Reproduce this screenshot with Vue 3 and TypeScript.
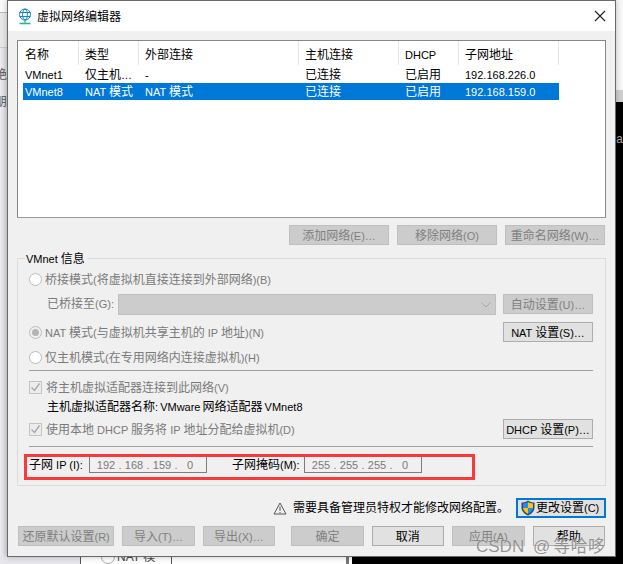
<script setup lang="ts">
import { h } from 'vue'
import type { FunctionalComponent } from 'vue'

/* Latin runs are drawn a size smaller than CJK runs, as the Windows UI font does. */
const T: FunctionalComponent<{ t: string }> = (props) =>
  props.t
    .split(/([\x20-\x7e…]+)/)
    .filter((s) => s.length > 0)
    .map((s) => (/^[\x20-\x7e…]/.test(s) ? h('span', { class: 'lat' }, s) : h('span', s)))
T.props = ['t']

const columns = ['名称', '类型', '外部连接', '主机连接', 'DHCP', '子网地址']
const rows = [
  { cells: ['VMnet1', '仅主机…', '-', '已连接', '已启用', '192.168.226.0'], selected: false },
  { cells: ['VMnet8', 'NAT 模式', 'NAT 模式', '已连接', '已启用', '192.168.159.0'], selected: true },
]
const netButtons = ['添加网络(E)…', '移除网络(O)', '重命名网络(W)…']
const subnetIp = ['192', '168', '159', '0']
const subnetMask = ['255', '255', '255', '0']
</script>

<template>
  <div class="desktop">
    <div class="bg-left">
      <div class="bl-top"></div>
      <div class="bl-mid"></div>
      <div class="bl-band"><span>绝</span><span>朋</span></div>
    </div>
    <div class="bg-right"><span class="bg-a">a</span></div>
    <div class="bg-bottom">
      <div class="bb-box"><span class="bb-radio"></span><span>NAT 模</span></div>
    </div>

    <div class="dialog">
      <header class="titlebar">
        <svg class="globe" width="14" height="18" viewBox="0 0 14 18" fill="none" stroke="#1583c9" stroke-width="1">
          <circle cx="7" cy="6.5" r="5.5" />
          <ellipse cx="7" cy="6.5" rx="2.4" ry="5.5" />
          <path d="M1.5 4.5h11M1.5 8.5h11" />
          <path d="M7 12v2.5M1.5 15.5h11" stroke="#1bb5a8" stroke-width="1.4" />
        </svg>
        <span class="title">虚拟网络编辑器</span>
        <svg class="close" width="12" height="12" viewBox="0 0 12 12" stroke="#222" stroke-width="1.1">
          <path d="M1 1l10 10M11 1L1 11" />
        </svg>
      </header>

      <main class="body">
        <section class="list">
          <div class="list-row list-head">
            <div v-for="c in columns" :key="c" class="head-cell"><T :t="c" /></div>
          </div>
          <div v-for="r in rows" :key="r.cells[0]" class="list-row data-row" :class="{ selected: r.selected }">
            <div v-for="(c, i) in r.cells" :key="i" class="data-cell"><T :t="c" /></div>
          </div>
        </section>

        <div class="net-buttons">
          <button v-for="b in netButtons" :key="b" class="btn disabled net-btn"><T :t="b" /></button>
        </div>

        <section class="group">
          <span class="legend"><T t="VMnet 信息" /></span>

          <label class="opt first"><span class="radio"></span><span class="opt-text"><T t="桥接模式(将虚拟机直接连接到外部网络)(B)" /></span></label>

          <div class="bridge-row">
            <span class="bridge-label"><T t="已桥接至(G):" /></span>
            <div class="combo">
              <svg width="10" height="6" viewBox="0 0 10 6" fill="none" stroke="#a6a6a6"><path d="M.5.5L5 5l4.5-4.5" /></svg>
            </div>
            <button class="btn disabled side-btn"><T t="自动设置(U)…" /></button>
          </div>

          <div class="nat-row">
            <label class="opt"><span class="radio on"></span><span class="opt-text"><T t="NAT 模式(与虚拟机共享主机的 IP 地址)(N)" /></span></label>
            <button class="btn side-btn"><T t="NAT 设置(S)…" /></button>
          </div>

          <label class="opt host"><span class="radio"></span><span class="opt-text"><T t="仅主机模式(在专用网络内连接虚拟机)(H)" /></span></label>

          <hr class="sep sep-a" />

          <label class="opt check-first">
            <span class="check">
              <svg width="11" height="11" viewBox="0 0 11 11" fill="none" stroke="#a8a8a8" stroke-width="1.4"><path d="M1.500 5.500l3 3 5-7" /></svg>
            </span><span class="opt-text"><T t="将主机虚拟适配器连接到此网络(V)" /></span>
          </label>
          <div class="adapter"><T t="主机虚拟适配器名称: VMware 网络适配器 VMnet8" /></div>

          <div class="dhcp-row">
            <label class="opt">
              <span class="check">
                <svg width="11" height="11" viewBox="0 0 11 11" fill="none" stroke="#a8a8a8" stroke-width="1.4"><path d="M1.500 5.500l3 3 5-7" /></svg>
              </span><span class="opt-text"><T t="使用本地 DHCP 服务将 IP 地址分配给虚拟机(D)" /></span>
            </label>
            <button class="btn side-btn"><T t="DHCP 设置(P)…" /></button>
          </div>

          <hr class="sep sep-b" />

          <div class="subnet-row">
            <span class="subnet-label"><T t="子网 IP (I):" /></span>
            <div class="ip">
              <template v-for="(o, i) in subnetIp" :key="i">
                <span class="octet">{{ o }}</span><span v-if="i < 3" class="dot">.</span>
              </template>
            </div>
            <span class="subnet-label mask-label"><T t="子网掩码(M):" /></span>
            <div class="ip">
              <template v-for="(o, i) in subnetMask" :key="i">
                <span class="octet">{{ o }}</span><span v-if="i < 3" class="dot">.</span>
              </template>
            </div>
          </div>
          <div class="redbox"></div>
        </section>

        <div class="warn-row">
          <svg width="14" height="13" viewBox="0 0 14 13" fill="none" stroke="#555" stroke-width="1">
            <path d="M7 1L1 12h12z" />
            <path d="M7 4.500V9M7 10v1" />
          </svg>
          <span class="warn-text">需要具备管理员特权才能修改网络配置。</span>
          <button class="btn change-btn">
            <svg width="14" height="16" viewBox="0 0 14 16">
              <path d="M7 .5c2 1.400 4 2 6.500 2v5c0 4-3 6.500-6.500 8C3.500 14 .5 11.500.5 7.500v-5C3 2.500 5 1.900 7 .5z" fill="#244a7a" />
              <path d="M7 2v6H2V3.500C4 3.300 5.500 3 7 2z" fill="#2c8be0" />
              <path d="M7 8h5c-.3 2.600-2.300 4.600-5 6z" fill="#2c8be0" />
              <path d="M7 2c1.500 1 3 1.300 5 1.500V8H7z" fill="#f5c518" />
              <path d="M7 8v6C4.300 12.600 2.300 10.600 2 8z" fill="#f5c518" />
            </svg>
            <span><T t="更改设置(C)" /></span>
          </button>
        </div>

        <footer class="footer">
          <button class="btn disabled restore"><T t="还原默认设置(R)" /></button>
          <button class="btn disabled small"><T t="导入(T)…" /></button>
          <button class="btn disabled small"><T t="导出(X)…" /></button>
          <span class="spacer"></span>
          <button class="btn disabled small">确定</button>
          <button class="btn small">取消</button>
          <button class="btn disabled small"><T t="应用(A)" /></button>
          <button class="btn small">帮助</button>
        </footer>
      </main>
    </div>

    <div class="watermark">CSDN @<span class="wm-name">等哈哆</span></div>
  </div>
</template>

<style>
html, body { margin: 0; background: #000; }
.lat { font-size: 11px; }
</style>

<style scoped>
.desktop {
  position: relative;
  width: 623px;
  height: 564px;
  overflow: hidden;
  background: #000;
  font: 12px/16px "Liberation Sans", "Noto Sans CJK SC", sans-serif;
  color: #000;
}

/* what shows behind the dialog */
.bg-left {
  position: absolute;
  left: 0; top: 0;
  width: 7px;
  height: 556px;
  display: flex;
  flex-direction: column;
  color: #555;
  overflow: hidden;
}
.bl-top { height: 12px; background: #fafafa; border-bottom: 1px solid #bbb; }
.bl-mid { height: 34px; background: #e8e8e8; border-bottom: 1px solid #ccc; }
.bl-band {
  flex: 1;
  background: linear-gradient(90deg, #ececf2, #d9d9df);
  padding-top: 19px;
  display: flex;
  flex-direction: column;
  gap: 11px;
  align-items: flex-end;
}
.bl-band span { height: 16px; width: 12px; flex: none; }
.bg-right {
  position: absolute;
  left: 615px; top: 0;
  width: 8px; height: 102px;
  background: #f8f8f8;
}
.bg-right::after {
  content: "";
  position: absolute;
  left: 0; top: 90px;
  width: 8px; height: 12px;
  background: #cfcfcf;
}
.bg-a {
  position: absolute;
  left: 1px; top: 133px;
  color: #aaa;
  font: 12px "Liberation Mono", monospace;
}
.bg-bottom {
  position: absolute;
  left: 0; top: 556px;
  width: 352px; height: 8px;
  background: #fff;
  overflow: hidden;
}
.bg-bottom::before {
  content: "";
  position: absolute;
  left: 0; top: 0;
  width: 80px; height: 8px;
  background: #e6e6ec;
}
.bb-box {
  position: absolute;
  left: 80px; top: -6px;
  width: 70px; height: 14px;
  border-left: 1px solid #555;
  border-right: 1px solid #555;
  padding-left: 20px;
  color: #444;
  display: flex;
  align-items: center;
  gap: 2px;
}
.bb-radio { width: 12px; height: 12px; border: 1px solid #aaa; border-radius: 50%; }
.bg-bottom::after {
  content: "";
  position: absolute;
  left: 346px; top: 0;
  width: 3px; height: 8px;
  background: #777;
}

/* window */
.dialog {
  position: absolute;
  left: 7px; top: 0;
  width: 609px;
  height: 557px;
  box-sizing: border-box;
  border: 1px solid #6a6a6a;
  background: #f0f0f0;
  display: flex;
  flex-direction: column;
  box-shadow: 0 0 6px rgba(0, 0, 0, .25);
}
.titlebar {
  height: 30px;
  flex: none;
  background: #fff;
  display: flex;
  align-items: center;
  padding: 0 9px 0 10px;
}
.globe { margin-top: 1px; }
.title { margin-left: 5px; flex: 1; padding-top: 2px; }

.body {
  flex: 1;
  padding: 9px 9px 0;
  display: flex;
  flex-direction: column;
}

.list {
  height: 178px;
  box-sizing: border-box;
  flex: none;
  background: #fff;
  border: 1px solid #82878f;
  border-bottom-color: #9a9a9a;
  padding-left: 5px;
}
.list-row {
  display: grid;
  grid-template-columns: 56px 60px 160px 100px 60px 100px;
  width: 536px;
}
.list-head { height: 25px; }
.head-cell {
  padding: 2px 0 0 6px;
  line-height: 24px;
  border-right: 1px solid #e5e5e5;
  height: 24px;
  box-sizing: border-box;
}
.head-cell:first-child, .data-cell:first-child { padding-left: 2px; }
.data-row { height: 17px; }
.data-cell {
  padding: 1px 0 0 6px;
  line-height: 17px;
  height: 17px;
  box-sizing: border-box;
  white-space: nowrap;
}
.selected { background: #0078d7; color: #fff; }

.net-buttons {
  display: flex;
  justify-content: flex-end;
  gap: 8px;
  margin-top: 7px;
  padding-right: 1px;
}

.btn {
  font: inherit;
  height: 20px;
  box-sizing: border-box;
  padding: 1px 0 0;
  border: 1px solid #adadad;
  background: #e1e1e1;
  color: #000;
  white-space: nowrap;
}
.btn.disabled {
  background: #cccccc;
  border-color: #bfbfbf;
  color: #7f7f7f;
}
.net-btn { width: 100px; }
.side-btn { width: 90px; flex: none; }

.group {
  position: relative;
  margin-top: 13px;
  height: 228px;
  flex: none;
  box-sizing: border-box;
  border: 1px solid #dcdcdc;
  padding: 12px 12px 0 11px;
  color: #7a7a7a;
}
.legend {
  position: absolute;
  left: 7px; top: -8px;
  padding: 0 2px 0 1px;
  background: #f0f0f0;
  color: #000;
}
.opt {
  display: flex;
  align-items: center;
  height: 16px;
}
.opt-text { padding-top: 2px; white-space: nowrap; }
.radio {
  width: 13px; height: 13px;
  box-sizing: border-box;
  flex: none;
  margin-right: 3px;
  border-radius: 50%;
  border: 1px solid #bcbcbc;
  background: #fff;
  display: flex;
  align-items: center;
  justify-content: center;
}
.radio.on { background: #f0f0f0; }
.radio.on::after {
  content: "";
  width: 7px; height: 7px;
  border-radius: 50%;
  background: #b4b4b4;
}
.check {
  width: 13px; height: 13px;
  box-sizing: border-box;
  flex: none;
  margin-right: 4px;
  border: 1px solid #c4c4c4;
  background: #ececec;
  display: flex;
  align-items: center;
  justify-content: center;
}

.bridge-row {
  display: flex;
  align-items: flex-start;
  margin-top: 7px;
  height: 21px;
}
.bridge-label { margin-left: 18px; width: 71px; line-height: 21px; flex: none; }
.combo {
  width: 378px;
  height: 21px;
  box-sizing: border-box;
  flex: none;
  background: #cccccc;
  border: 1px solid #bfbfbf;
  display: flex;
  align-items: center;
  justify-content: flex-end;
  padding-right: 4px;
}
.bridge-row .side-btn { margin-left: 7px; }
.nat-row {
  display: flex;
  justify-content: space-between;
  align-items: center;
  margin-top: 7px;
  height: 20px;
}
.host { margin-top: 7px; }
.sep {
  margin: 0;
  border: 0;
  border-top: 1px solid #a0a0a0;
  height: 0;
}
.sep-a { margin-top: 5px; }
.check-first { margin-top: 8px; }
.adapter {
  margin: 3px 0 0 18px;
  height: 16px;
  color: #000;
  padding-top: 1px;
  box-sizing: border-box;
  white-space: pre;
  word-spacing: -1px;
}
.dhcp-row {
  display: flex;
  justify-content: space-between;
  align-items: center;
  margin-top: 5px;
  height: 20px;
}
.sep-b { margin-top: 7px; }
.subnet-row {
  display: flex;
  align-items: center;
  margin-top: 9px;
  height: 17px;
  color: #000;
}
.subnet-label { width: 60px; flex: none; }
.mask-label { margin-left: 25px; width: 72px; }
.ip {
  width: 118px;
  height: 17px;
  box-sizing: border-box;
  flex: none;
  display: flex;
  align-items: center;
  padding-left: 5px;
  color: #7a7a7a;
  border: 1px solid #7d7d7d;
  border-top-color: #b5b5b5;
  background: #f0f0f0;
  font-size: 11px;
}
.octet { width: 22px; text-align: center; }
.dot { width: 6px; text-align: center; }
.redbox {
  position: absolute;
  left: 6px; top: 195px;
  width: 451px;
  height: 26px;
  box-sizing: border-box;
  border: 3px solid #f83a3a;
  pointer-events: none;
}

.warn-row {
  display: flex;
  align-items: center;
  height: 20px;
  margin-top: 12px;
  flex: none;
  padding-left: 256px;
}
.warn-text { margin-left: 6px; width: 223px; flex: none; }
.change-btn {
  width: 90px;
  height: 20px;
  border: 2px solid #0078d7;
  display: flex;
  align-items: center;
  padding: 0 0 0 3px;
  gap: 1px;
}

.footer {
  display: flex;
  gap: 8px;
  margin-top: 8px;
  padding: 0 1px;
  flex: none;
}
.restore { width: 97px; }
.small { width: 73px; }
.spacer { flex: 1; }

.watermark {
  position: absolute;
  left: 476px; top: 535px;
  font-size: 17px;
  line-height: 24px;
  word-spacing: 4px;
  color: rgba(120, 120, 120, .8);
  text-shadow: 0 0 1px rgba(255, 255, 255, .8);
  white-space: nowrap;
}
.wm-name { margin-left: 3px; letter-spacing: .4px; }
</style>
